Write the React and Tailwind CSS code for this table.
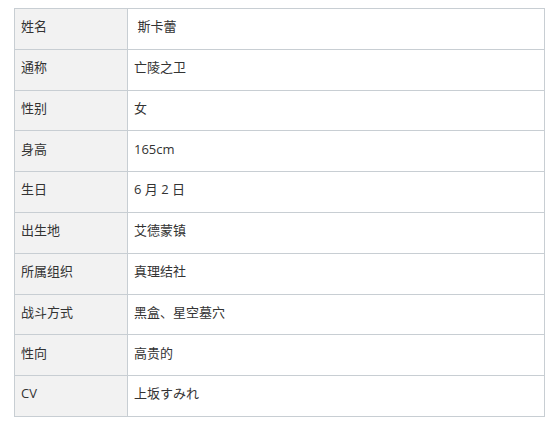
export default function App() {
  const rows = [
    ["姓名", " 斯卡蕾"],
    ["通称", "亡陵之卫"],
    ["性别", "女"],
    ["身高", "165cm"],
    ["生日", "6 月 2 日"],
    ["出生地", "艾德蒙镇"],
    ["所属组织", "真理结社"],
    ["战斗方式", "黑盒、星空墓穴"],
    ["性向", "高贵的"],
    ["CV", "上坂すみれ"],
  ];

  return (
    <div className="w-[555px] h-[428px] bg-white pt-[8px] pl-[14px]">
      <table
        className="w-[531px] border-collapse text-[13px] text-[#333]"
        style={{ fontFamily: '"Open Sans", "Noto Sans CJK SC", sans-serif' }}
      >
        <tbody>
          {rows.map(([label, value], i) => (
            <tr key={i} className="h-[40.8px]">
              <td className="w-[113px] border border-[#c8ced3] bg-[#f2f2f2] px-[6px] pb-[4px] align-middle whitespace-pre">
                {label}
              </td>
              <td className="border border-[#c8ced3] px-[6px] pb-[4px] align-middle whitespace-pre">
                {value}
              </td>
            </tr>
          ))}
        </tbody>
      </table>
    </div>
  );
}
